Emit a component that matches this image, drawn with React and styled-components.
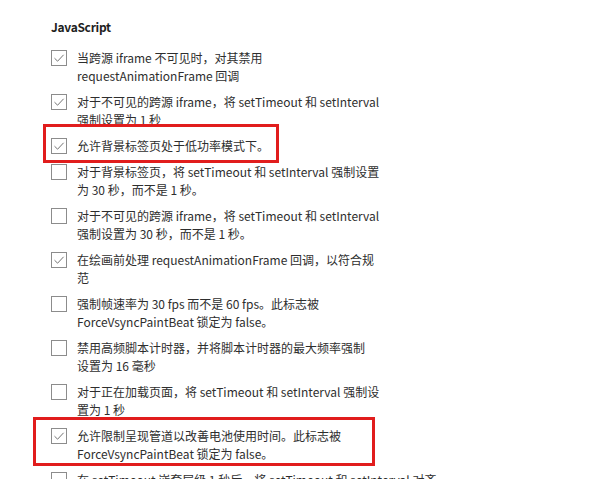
import styled, { createGlobalStyle } from "styled-components";

const GlobalStyle = createGlobalStyle`
    html, body {
        margin: 0;
        background: #ffffff;
        overflow: hidden;
    }
    body {
        font-family: "Noto Sans CJK SC", "Noto Sans", sans-serif;
        color: #2b2b2b;
    }
`;

const Page = styled.div`
    padding: 18px 0 0 51px;
`;

const SectionTitle = styled.h2`
    margin: 0 0 13px;
    font-size: 12px;
    line-height: 18px;
    font-weight: 600;
    letter-spacing: -0.3px;
    color: #1f1f1f;
`;

const List = styled.div`
    display: flex;
    flex-direction: column;
    gap: 8px;
`;

const Option = styled.label`
    position: relative;
    display: flex;
    align-items: flex-start;
    gap: 10px;
`;

const Box = styled.span`
    flex: none;
    width: 14px;
    height: 14px;
    margin-top: 1px;
    border: 1px solid #8c8c8c;
    background: #fff;
    display: flex;
    align-items: center;
    justify-content: center;
`;

const Text = styled.span`
    font-size: 12px;
    line-height: 18px;
    white-space: nowrap;
    color: #2e2e2e;
`;

const Highlight = styled.span`
    position: absolute;
    top: ${(p) => p.top}px;
    left: ${(p) => p.left}px;
    width: ${(p) => p.width}px;
    height: ${(p) => p.height}px;
    box-sizing: border-box;
    border: 3px solid #e11d1d;
    pointer-events: none;
`;

const Check = () => (
    <svg width="12" height="12" viewBox="0 0 12 12">
        <path d="M1.5 6.2 L4.6 9.2 L10.6 2.8" fill="none" stroke="#737373" strokeWidth="1" />
    </svg>
);

const options = [
    { on: true, lines: ["当跨源 iframe 不可见时，对其禁用", "requestAnimationFrame 回调"] },
    { on: true, lines: ["对于不可见的跨源 iframe，将 setTimeout 和 setInterval", "强制设置为 1 秒"] },
    {
        on: true,
        lines: ["允许背景标签页处于低功率模式下。"],
        mark: { top: -13, left: -8, width: 236, height: 39 },
    },
    { on: false, lines: ["对于背景标签页，将 setTimeout 和 setInterval 强制设置", "为 30 秒，而不是 1 秒。"] },
    { on: false, lines: ["对于不可见的跨源 iframe，将 setTimeout 和 setInterval", "强制设置为 30 秒，而不是 1 秒。"] },
    { on: true, lines: ["在绘画前处理 requestAnimationFrame 回调，以符合规", "范"] },
    { on: false, lines: ["强制帧速率为 30 fps 而不是 60 fps。此标志被", "ForceVsyncPaintBeat 锁定为 false。"] },
    { on: false, lines: ["禁用高频脚本计时器，并将脚本计时器的最大频率强制", "设置为 16 毫秒"] },
    { on: false, lines: ["对于正在加载页面，将 setTimeout 和 setInterval 强制设", "置为 1 秒"] },
    {
        on: true,
        lines: ["允许限制呈现管道以改善电池使用时间。此标志被", "ForceVsyncPaintBeat 锁定为 false。"],
        mark: { top: -10, left: -18, width: 342, height: 49 },
    },
    { on: false, lines: ["在 setTimeout 嵌套层级 1 秒后，将 setTimeout 和 setInterval 对齐", "到 1 秒"] },
];

function App() {
    return (
        <Page>
            <GlobalStyle />
            <SectionTitle>JavaScript</SectionTitle>
            <List>
                {options.map((o, i) => (
                    <Option key={i}>
                        <Box>{o.on && <Check />}</Box>
                        <Text>
                            {o.lines.map((l, j) => (
                                <span key={j}>
                                    {j > 0 && <br />}
                                    {l}
                                </span>
                            ))}
                        </Text>
                        {o.mark && <Highlight {...o.mark} />}
                    </Option>
                ))}
            </List>
        </Page>
    );
}

export default App;
